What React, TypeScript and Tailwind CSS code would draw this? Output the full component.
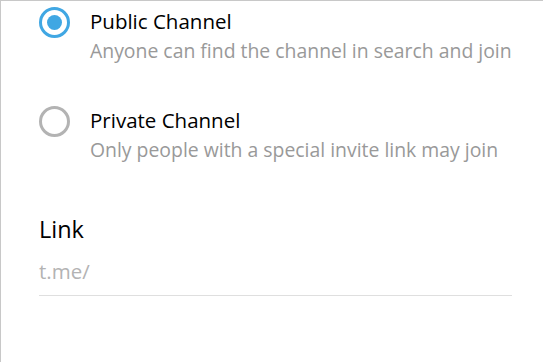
import React from 'react';

type OptionProps = {
  title: string;
  description: string;
  checked?: boolean;
};

const RadioOption: React.FC<OptionProps> = ({ title, description, checked }) => {
  return (
    <div className="flex items-start">
      <div
        className={`w-[31px] h-[31px] rounded-full border-[3px] flex items-center justify-center shrink-0 ${
          checked ? 'border-[#40a7e3]' : 'border-[#b3b3b3]'
        }`}
      >
        {checked && <div className="w-[15px] h-[15px] rounded-full bg-[#40a7e3]" />}
      </div>
      <div className="ml-[20px] mt-[2px]">
        <div className="text-[20.5px] leading-[24px] text-black">{title}</div>
        <div className="mt-[5px] text-[19.4px] leading-[26px] text-[#999999]">{description}</div>
      </div>
    </div>
  );
};

export default function App() {
  return (
    <div className="w-[543px] h-[362px] bg-white border-t border-l border-[#c8c8c8] font-['Open_Sans',sans-serif] overflow-hidden">
      <div className="pl-[38px] pr-[31px] pt-[6px]">
        <RadioOption
          checked
          title="Public Channel"
          description="Anyone can find the channel in search and join"
        />
        <div className="mt-[42px]">
          <RadioOption
            title="Private Channel"
            description="Only people with a special invite link may join"
          />
        </div>
        <div className="mt-[51px]">
          <div className="text-[23.5px] leading-[30px] text-black">Link</div>
          <div className="mt-[14px] border-b border-[#dfdfdf] pb-[11px] text-[20.5px] leading-[26px] text-[#b3b3b3]">
            t.me/
          </div>
        </div>
      </div>
    </div>
  );
}
